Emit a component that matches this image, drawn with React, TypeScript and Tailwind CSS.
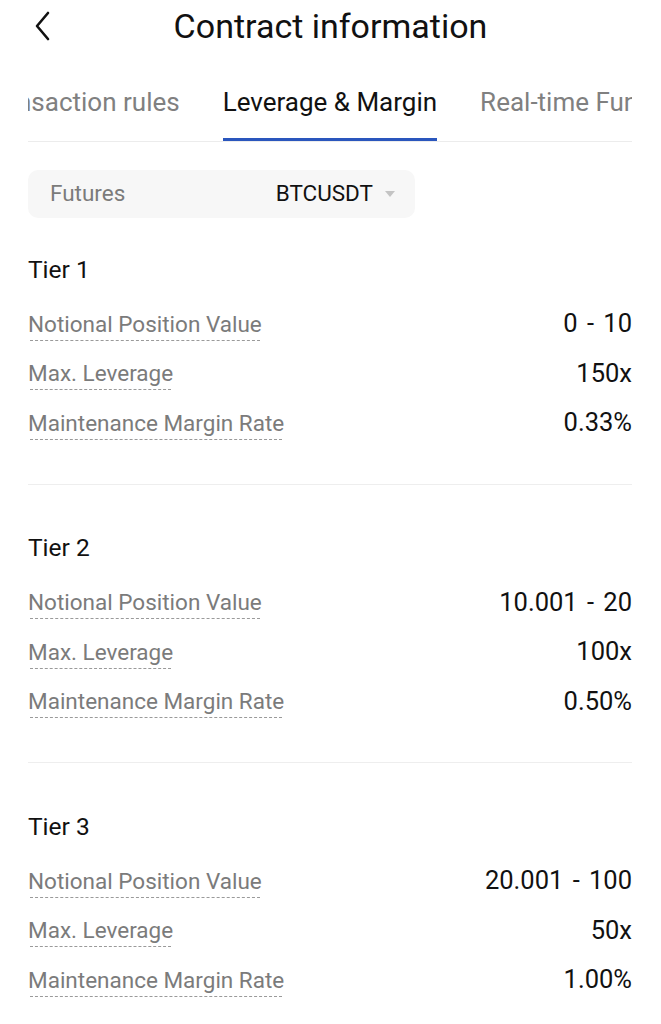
import React from "react";

const data = [
  { name: "Tier 1", range: "0 - 10", lev: "150x", mmr: "0.33%" },
  { name: "Tier 2", range: "10.001 - 20", lev: "100x", mmr: "0.50%" },
  { name: "Tier 3", range: "20.001 - 100", lev: "50x", mmr: "1.00%" },
];

function Row({ label, value }: { label: string; value: string }) {
  return (
    <div className="flex h-[49.5px] items-center justify-between">
      <span className="relative text-[22.5px] leading-none text-[#7b7b7b]">
        {label}
        <span className="absolute left-[2px] right-[2px] top-[27px] border-b-[1.5px] border-dashed border-[#9a9a9a]" />
      </span>
      <span className="text-[25.5px] leading-none text-[#111] [word-spacing:3px]">{value}</span>
    </div>
  );
}

export default function App() {
  return (
    <div
      className="w-[661px] h-[1024px] overflow-hidden bg-white"
      style={{ fontFamily: "Roboto, 'Noto Sans', sans-serif" }}
    >
      <div className="relative flex h-[52px] items-center justify-center">
        <svg className="absolute left-[33px] top-[11px]" width="20" height="30" viewBox="0 0 20 30" fill="none">
          <path d="M15 2 L4 15 L15 28" stroke="#111" strokeWidth="2.6" strokeLinecap="round" strokeLinejoin="round" />
        </svg>
        <h1 className="text-[34px] leading-none text-[#111]">Contract information</h1>
      </div>
      <div className="ml-[28px] mr-[29px] mt-[11px] overflow-hidden border-b border-[#ececec]">
        <div className="ml-[-48px] flex gap-[43px] whitespace-nowrap">
          <div className="flex h-[78px] items-center text-[26px] text-[#808080]">Transaction rules</div>
          <div className="relative flex h-[78px] items-center text-[26px] text-[#111]">
            Leverage &amp; Margin
            <span className="absolute bottom-0 left-0 right-0 h-[3px] bg-[#2a56bd]" />
          </div>
          <div className="flex h-[78px] items-center text-[26px] text-[#808080]">Real-time Funding Rate</div>
        </div>
      </div>
      <div className="pl-[28px] pr-[29px]">
        <div className="mt-[28px] flex h-[48px] w-[387px] items-center justify-between rounded-[10px] bg-[#f7f7f7] pl-[22px] pr-[20px]">
          <span className="text-[22.5px] text-[#7b7b7b]">Futures</span>
          <span className="flex items-center gap-[12px]">
            <span className="text-[22.5px] text-[#111]">BTCUSDT</span>
            <svg width="10" height="7" viewBox="0 0 10 7">
              <path d="M0 0 L10 0 L5 6 Z" fill="#c4c4c4" />
            </svg>
          </span>
        </div>
        {data.map((t, i) => (
          <div key={t.name}>
            {i > 0 && <div className="mt-[36px] border-t border-[#eeeeee]" />}
            <div className={i === 0 ? "mt-[38px]" : "mt-[50px]"}>
              <div className="flex h-[28px] items-center text-[24.5px] text-[#111]">{t.name}</div>
              <div className="mt-[15px]">
                <Row label="Notional Position Value" value={t.range} />
                <Row label="Max. Leverage" value={t.lev} />
                <Row label="Maintenance Margin Rate" value={t.mmr} />
              </div>
            </div>
          </div>
        ))}
      </div>
    </div>
  );
}
